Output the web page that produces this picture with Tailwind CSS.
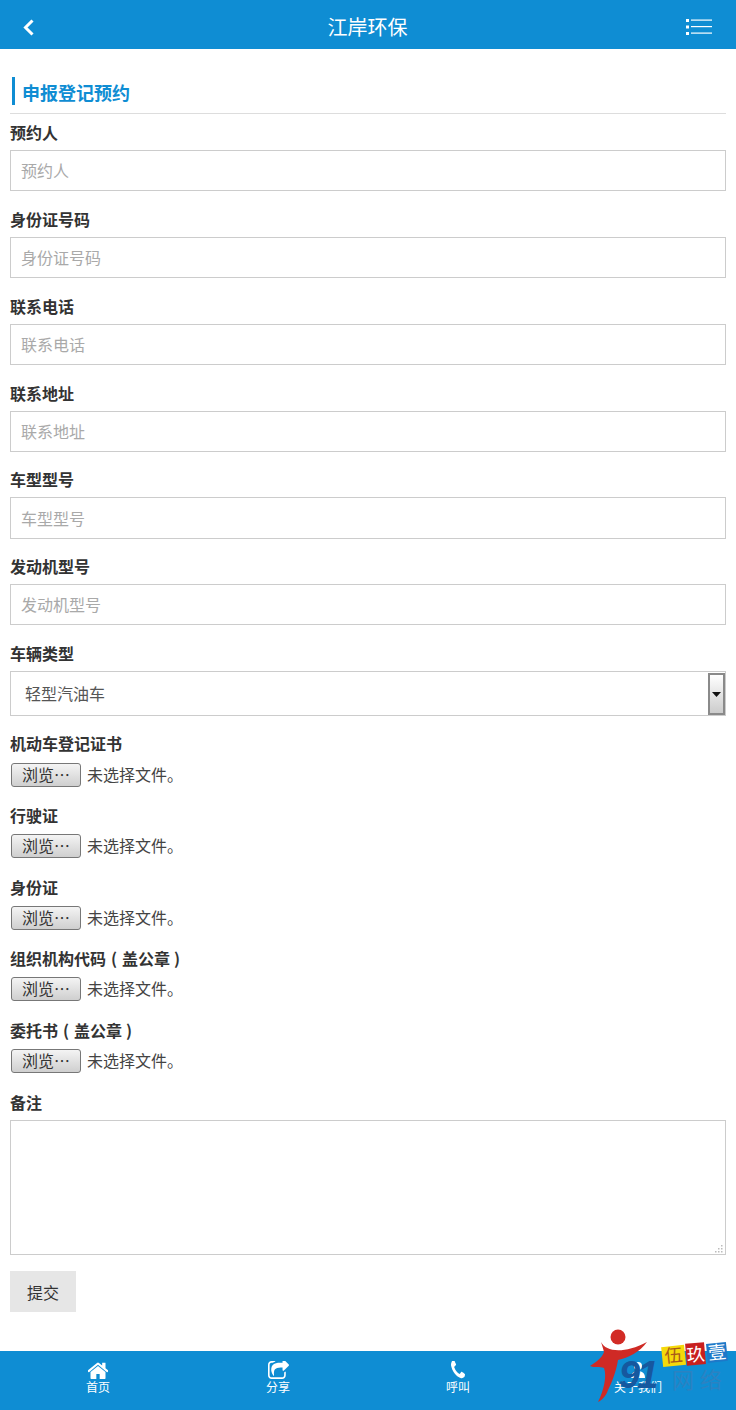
<!DOCTYPE html>
<html lang="zh-CN">
<head>
<meta charset="utf-8">
<title>江岸环保</title>
<script src="https://cdn.jsdelivr.net/npm/@tailwindcss/browser@4"></script>
</head>
<body class="relative w-[736px] h-[1410px] overflow-hidden bg-white font-['Noto_Sans_CJK_SC','Liberation_Sans',sans-serif] text-[#333]">
<header class="h-[49px] bg-[#0f8dd3] grid grid-cols-3 items-center pl-[23px] pr-[24px] text-white">
  <svg class="w-[11px] h-[17px] mt-[5px]" viewBox="0 0 11 17" fill="none" stroke="white" stroke-width="3"><path d="M9.5 1.5 2.5 8.5l7 7"/></svg>
  <h1 class="justify-self-center text-[20px] leading-[28px] font-normal mt-[5px]">江岸环保</h1>
  <svg class="justify-self-end w-[26px] h-[18px] mt-[5px]" viewBox="0 0 26 18" fill="white"><rect x="0" y="1" width="3" height="3"/><rect x="0" y="7.5" width="3" height="3"/><rect x="0" y="14" width="3" height="3"/><rect x="5" y="1.5" width="21" height="1.2"/><rect x="5" y="8" width="21" height="1.2"/><rect x="5" y="14.5" width="21" height="1.2"/></svg>
</header>

<main class="px-[10px] pt-[28px] pb-[39px]">
  <div class="h-[37px] border-b border-[#ddd]">
    <h2 class="ml-[2px] h-[28px] border-l-[3px] border-[#0f8dd3] pl-[7px] text-[18px] leading-[31px] font-bold text-[#0f8dd3]">申报登记预约</h2>
  </div>

  <form>
    <div class="mt-[9px]">
      <label class="block h-[20px] leading-[18px] text-[16px] font-bold mb-[7px]">预约人</label>
      <input placeholder="预约人" class="block w-full h-[41px] border border-[#ccc] px-[10px] pb-[2px] text-[16px] placeholder:text-[#a9a9a9] outline-none">
    </div>
    <div class="mt-[19px]">
      <label class="block h-[20px] leading-[18px] text-[16px] font-bold mb-[7px]">身份证号码</label>
      <input placeholder="身份证号码" class="block w-full h-[41px] border border-[#ccc] px-[10px] pb-[2px] text-[16px] placeholder:text-[#a9a9a9] outline-none">
    </div>
    <div class="mt-[19px]">
      <label class="block h-[20px] leading-[18px] text-[16px] font-bold mb-[7px]">联系电话</label>
      <input placeholder="联系电话" class="block w-full h-[41px] border border-[#ccc] px-[10px] pb-[2px] text-[16px] placeholder:text-[#a9a9a9] outline-none">
    </div>
    <div class="mt-[19px]">
      <label class="block h-[20px] leading-[18px] text-[16px] font-bold mb-[7px]">联系地址</label>
      <input placeholder="联系地址" class="block w-full h-[41px] border border-[#ccc] px-[10px] pb-[2px] text-[16px] placeholder:text-[#a9a9a9] outline-none">
    </div>
    <div class="mt-[18px]">
      <label class="block h-[20px] leading-[18px] text-[16px] font-bold mb-[7px]">车型型号</label>
      <input placeholder="车型型号" class="block w-full h-[42px] border border-[#ccc] px-[10px] text-[16px] placeholder:text-[#a9a9a9] outline-none">
    </div>
    <div class="mt-[18px]">
      <label class="block h-[20px] leading-[18px] text-[16px] font-bold mb-[7px]">发动机型号</label>
      <input placeholder="发动机型号" class="block w-full h-[41px] border border-[#ccc] px-[10px] pb-[2px] text-[16px] placeholder:text-[#a9a9a9] outline-none">
    </div>
    <div class="mt-[19px]">
      <label class="block h-[20px] leading-[18px] text-[16px] font-bold mb-[7px]">车辆类型</label>
      <div class="relative h-[45px] border border-[#ccc] pl-[14px] pb-[2px] flex items-center text-[16px] text-[#555]">
        <span>轻型汽油车</span>
        <div class="absolute right-0 top-[1px] w-[17px] h-[42px] border-2 border-[#8a8a8a] bg-gradient-to-b from-white to-[#ccc] flex items-center justify-center">
          <svg class="w-[9px] h-[5px]" viewBox="0 0 9 5" fill="#111"><path d="M0 0h9L4.500 5z"/></svg>
        </div>
      </div>
    </div>

    <div class="mt-[19px]">
      <label class="block h-[20px] leading-[16px] text-[16px] font-bold mb-[8px]">机动车登记证书</label>
      <div class="flex items-center h-[24px] text-[16px] text-[#444]">
        <span class="ml-[1px] w-[70px] h-[24px] pb-[2px] border border-[#777] rounded-[3px] bg-gradient-to-b from-[#f4f4f4] to-[#cfcfcf] flex items-center justify-center text-[16px] text-[#333]">浏览…</span>
        <span class="ml-[6px] pb-[2px]">未选择文件。</span>
      </div>
    </div>
    <div class="mt-[19px]">
      <label class="block h-[20px] leading-[18px] text-[16px] font-bold mb-[8px]">行驶证</label>
      <div class="flex items-center h-[24px] text-[16px] text-[#444]">
        <span class="ml-[1px] w-[70px] h-[24px] pb-[2px] border border-[#777] rounded-[3px] bg-gradient-to-b from-[#f4f4f4] to-[#cfcfcf] flex items-center justify-center text-[16px] text-[#333]">浏览…</span>
        <span class="ml-[6px] pb-[2px]">未选择文件。</span>
      </div>
    </div>
    <div class="mt-[20px]">
      <label class="block h-[20px] leading-[18px] text-[16px] font-bold mb-[8px]">身份证</label>
      <div class="flex items-center h-[24px] text-[16px] text-[#444]">
        <span class="ml-[1px] w-[70px] h-[24px] pb-[2px] border border-[#777] rounded-[3px] bg-gradient-to-b from-[#f4f4f4] to-[#cfcfcf] flex items-center justify-center text-[16px] text-[#333]">浏览…</span>
        <span class="ml-[6px] pb-[2px]">未选择文件。</span>
      </div>
    </div>
    <div class="mt-[19px]">
      <label class="block h-[20px] leading-[18px] text-[16px] font-bold mb-[8px]">组织机构代码<span class="mx-[5px]">(</span>盖公章<span class="ml-[4px]">)</span></label>
      <div class="flex items-center h-[24px] text-[16px] text-[#444]">
        <span class="ml-[1px] w-[70px] h-[24px] pb-[2px] border border-[#777] rounded-[3px] bg-gradient-to-b from-[#f4f4f4] to-[#cfcfcf] flex items-center justify-center text-[16px] text-[#333]">浏览…</span>
        <span class="ml-[6px] pb-[2px]">未选择文件。</span>
      </div>
    </div>
    <div class="mt-[20px]">
      <label class="block h-[20px] leading-[18px] text-[16px] font-bold mb-[8px]">委托书<span class="mx-[5px]">(</span>盖公章<span class="ml-[4px]">)</span></label>
      <div class="flex items-center h-[24px] text-[16px] text-[#444]">
        <span class="ml-[1px] w-[70px] h-[24px] pb-[2px] border border-[#777] rounded-[3px] bg-gradient-to-b from-[#f4f4f4] to-[#cfcfcf] flex items-center justify-center text-[16px] text-[#333]">浏览…</span>
        <span class="ml-[6px] pb-[2px]">未选择文件。</span>
      </div>
    </div>
    <div class="mt-[20px]">
      <label class="block h-[20px] leading-[18px] text-[16px] font-bold mb-[7px]">备注</label>
      <div class="relative">
        <textarea class="block w-full h-[135px] border border-[#ccc] outline-none resize-none"></textarea>
        <svg class="absolute right-[3px] bottom-[2px] w-[9px] h-[8px]" viewBox="0 0 9 8" fill="#bbb"><rect x="7" y="0" width="1.500" height="1.500"/><rect x="4" y="3" width="1.500" height="1.500"/><rect x="7" y="3" width="1.500" height="1.500"/><rect x="1" y="6" width="1.500" height="1.500"/><rect x="4" y="6" width="1.500" height="1.500"/><rect x="7" y="6" width="1.500" height="1.500"/></svg>
      </div>
    </div>
    <div class="mt-[16px] w-[66px] h-[41px] bg-[#e6e6e6] flex items-center justify-center text-[16px] text-[#333]">提交</div>
  </form>
</main>

<footer class="absolute bottom-0 left-0 right-0 h-[59px] bg-[#0f8dd3] px-[8px] grid grid-cols-4 text-white text-[12px]">
  <a class="flex flex-col items-center pt-[10px]">
    <svg class="w-[20px] h-[18px]" viewBox="128 128 1536 1408" preserveAspectRatio="none" fill="white"><path d="M1472 992v480q0 26-19 45t-45 19h-384v-384h-256v384h-384q-26 0-45-19t-19-45v-480q0-1 .5-3t.5-3l575-474 575 474q1 2 1 6zm223-69l-62 74q-8 9-21 11h-3q-13 0-21-7l-692-577-692 577q-12 8-24 7-13-2-21-11l-62-74q-8-10-7-23.5t11-21.5l719-599q32-26 76-26t76 26l244 204v-195q0-14 9-23t23-9h192q14 0 23 9t9 23v408l219 182q10 8 11 21.5t-7 23.5z"/></svg>
    <span class="leading-[16px]">首页</span>
  </a>
  <a class="flex flex-col items-center pt-[10px]">
    <svg class="w-[21px] h-[18px]" viewBox="64 128 1664 1408" preserveAspectRatio="none" fill="white"><path d="M1472 989v259q0 119-84.500 203.500t-203.500 84.500h-832q-119 0-203.500-84.500t-84.500-203.500v-832q0-119 84.500-203.500t203.500-84.500h255q13 0 22.500 9.500t9.500 22.500q0 27-26 32-77 26-133 60-10 4-16 4h-112q-66 0-113 47t-47 113v832q0 66 47 113t113 47h832q66 0 113-47t47-113v-214q0-19 18-29 28-13 54-37 16-16 35-8 21 9 21 29zm237-496l-384 384q-18 19-45 19-12 0-25-5-39-17-39-59v-192h-160q-323 0-438 131-119 137-74 473 3 23-20 34-8 2-12 2-16 0-26-13-10-14-21-31t-39.500-68.500-49.500-99.500-38.500-114-17.500-122q0-49 3.500-91t14-90 28-88 47-81.500 68.500-74 94.500-61.500 124.500-48.500 159.500-30.500 196.500-11h160v-192q0-42 39-59 13-5 25-5 26 0 45 19l384 384q19 19 19 45t-19 45z"/></svg>
    <span class="leading-[16px]">分享</span>
  </a>
  <a class="flex flex-col items-center pt-[10px]">
    <svg class="w-[14px] h-[18px]" viewBox="192 192 1408 1408" preserveAspectRatio="none" fill="white"><path d="M1600 1240q0 27-10 70.500t-21 68.500q-21 50-122 106-94 51-186 51-27 0-53-3.500t-57.500-12.500-47-14.500-55.500-20.500-49-18q-98-35-175-83-127-79-264-216t-216-264q-48-77-83-175-3-9-18-49t-20.500-55.500-14.500-47-12.500-57.500-3.500-53q0-92 51-186 56-101 106-122 25-11 68.500-21t70.500-10q14 0 21 3 18 6 53 76 11 19 30 54t35 63.500 31 53.500q3 4 17.500 25t21.500 35.500 7 28.500q0 20-28.500 50t-62 55-62 53-28.500 46q0 9 5 22.500t8.500 20.500 14 24 11.500 19q76 137 174 235t235 174q2 1 19 11.500t24 14 20.500 8.500 22.500 5q18 0 46-28.500t53-62 55-62 50-28.500q14 0 28.500 7t35.500 21.500 25 17.500q25 15 53.500 31t63.500 35 54 30q70 35 76 53 3 7 3 21z"/></svg>
    <span class="leading-[16px]">呼叫</span>
  </a>
  <a class="flex flex-col items-center pt-[10px]">
    <svg class="w-[16px] h-[18px]" viewBox="0 0 16 18" fill="white"><circle cx="8" cy="5" r="4"/><path d="M1 17c0-5 3-7 7-7s7 2 7 7z"/></svg>
    <span class="leading-[16px]">关于我们</span>
  </a>
</footer>

<svg class="absolute left-[580px] top-[1320px] w-[156px] h-[90px] pointer-events-none" viewBox="580 1320 156 90">
  <circle cx="618" cy="1337" r="7.500" fill="#d22c26"/>
  <path d="M601 1342 C606 1352 624 1354 647 1342 C640 1352 628 1358 618 1360 C616 1372 612 1382 608 1390 C606 1396 602 1400 598 1402 C604 1390 607 1376 604 1368 C600 1366 594 1368 590 1366 C596 1362 602 1358 604 1352 C603 1348 602 1345 601 1342 Z" fill="#cf2a25"/>
  <text x="619" y="1388" font-family="Liberation Sans, sans-serif" font-size="38" font-weight="bold" font-style="italic" letter-spacing="-3" fill="#16589f">91</text>
  <g font-family="Noto Sans CJK SC, sans-serif" font-size="18" text-anchor="middle">
    <g transform="rotate(-6 673 1355)"><rect x="662" y="1346" width="23" height="20" fill="#f5d90a"/><text x="673.500" y="1362" fill="#a8591a">伍</text></g>
    <g transform="rotate(-5 695 1354)"><rect x="686" y="1343" width="19" height="22" fill="#c8201f"/><text x="695.500" y="1361" fill="#fff">玖</text></g>
    <g transform="rotate(-6 716 1353)"><rect x="707" y="1343" width="20" height="19" fill="#1d78c8"/><text x="717" y="1359" fill="#fff">壹</text></g>
  </g>
  <text x="672" y="1388" font-family="Noto Sans CJK SC, sans-serif" font-size="22" letter-spacing="6" fill="#2b82c2">网络</text>
</svg>
</body>
</html>
